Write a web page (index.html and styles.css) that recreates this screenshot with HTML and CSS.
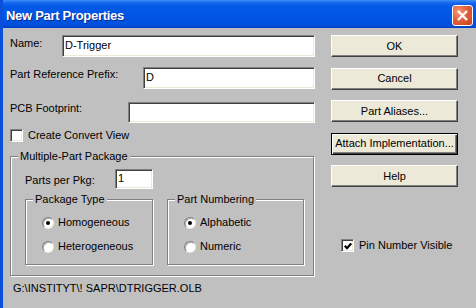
FILE: index.html
```html
<!DOCTYPE html>
<html lang="en">
<head>
  <meta charset="UTF-8">
  <title>New Part Properties</title>
  <link rel="stylesheet" href="styles.css">
</head>
<body>
  <div class="window">
    <div class="titlebar">
      <span class="title">New Part Properties</span>
      <span class="close">
        <svg width="19" height="19" viewBox="0 0 19 19"><path d="M5 5 L14 14 M14 5 L5 14" stroke="#fff" stroke-width="2.4" fill="none"/></svg>
      </span>
    </div>

    <div class="content">
      <div class="form">
        <div class="row row-name">
          <label class="lbl lbl-name" for="name">Name:</label>
          <input class="field" id="name" value="D-Trigger">
        </div>
        <div class="row row-prefix">
          <label class="lbl lbl-prefix" for="prefix">Part Reference Prefix:</label>
          <input class="field" id="prefix" value="D">
        </div>
        <div class="row row-pcb">
          <label class="lbl lbl-pcb" for="pcb">PCB Footprint:</label>
          <input class="field field-pcb" id="pcb" value="">
        </div>
        <div class="check check-convert"><span class="box"></span><span>Create Convert View</span></div>

        <fieldset class="group group-main">
          <legend>Multiple-Part Package</legend>
          <div class="row row-parts">
            <label class="lbl lbl-parts" for="parts">Parts per Pkg:</label>
            <input class="field field-parts" id="parts" value="1">
          </div>
          <div class="subgroups">
            <fieldset class="group group-type">
              <legend>Package Type</legend>
              <div class="option"><span class="radio on"></span>Homogeneous</div>
              <div class="option"><span class="radio"></span>Heterogeneous</div>
            </fieldset>
            <fieldset class="group group-numbering">
              <legend>Part Numbering</legend>
              <div class="option"><span class="radio on"></span>Alphabetic</div>
              <div class="option"><span class="radio"></span>Numeric</div>
            </fieldset>
          </div>
        </fieldset>
      </div>

      <div class="actions">
        <button class="btn">OK</button>
        <button class="btn">Cancel</button>
        <button class="btn">Part Aliases...</button>
        <button class="btn btn-default">Attach Implementation...</button>
        <button class="btn">Help</button>
        <div class="check check-pin">
          <span class="box"><svg width="8" height="8" viewBox="0 0 8 8"><polyline points="0.8,3.8 3,6.2 7.2,1.4" stroke="#000" stroke-width="2.2" fill="none"/></svg></span>
          <span>Pin Number Visible</span>
        </div>
      </div>
    </div>

    <div class="path">G:\INSTITYT\! SAPR\DTRIGGER.OLB</div>
  </div>
</body>
</html>
```

FILE: styles.css
```css
body {
  margin: 0;
  font-family: "Liberation Sans", Arial, sans-serif;
  font-size: 11px;
  line-height: 13px;
  color: #000;
  background: #c0c0c0;
  overflow: hidden;
}
.window {
  width: 476px;
  height: 308px;
  box-sizing: border-box;
  border-left: 3px solid #0a4fdc;
  background: #c0c0c0;
  overflow: hidden;
}
.titlebar {
  height: 28px;
  box-sizing: border-box;
  margin-left: -3px;
  padding: 2px 3px 0 6px;
  display: flex;
  align-items: center;
  justify-content: space-between;
  background: linear-gradient(to bottom, #3d8ef5 0, #1666ee 3px, #0559e6 6px, #0055e5 18px, #0050dc 25px, #0040c6 28px);
}
.title {
  color: #fff;
  font-weight: bold;
  font-size: 13px;
  letter-spacing: -0.3px;
  text-shadow: 1px 1px 0 #0a2a8c;
}
.close {
  width: 21px;
  height: 21px;
  box-sizing: border-box;
  border: 1px solid #fff;
  border-radius: 3px;
  background: radial-gradient(circle at 30% 30%, #f29a78 0, #e3603a 45%, #c8401e 100%);
  display: flex;
  align-items: center;
  justify-content: center;
}

/* dialog body */
.content {
  display: flex;
  gap: 16px;
  padding: 7px 0 0 7px;
}
.form {
  width: 305px;
}
.row {
  display: flex;
  align-items: flex-start;
}
.lbl {
  flex: none;
}
.lbl-name { width: 52px; padding-top: 2px; }
.lbl-prefix { width: 133px; padding-top: 1px; }
.lbl-pcb { width: 118px; }
.lbl-parts { width: 90px; padding-top: 5px; }

.row-prefix { margin-top: 10px; }
.row-pcb { margin-top: 13px; }

.field {
  flex: 1;
  min-width: 0;
  height: 22px;
  box-sizing: border-box;
  margin: 0;
  padding: 0 2px 3px 2px;
  font: inherit;
  color: #000;
  background: #fff;
  border: 1px solid;
  border-color: #808080 #fff #fff #808080;
  box-shadow: inset 1px 1px 0 #404040, inset -1px -1px 0 #ece9d8;
  outline: none;
}
.field-pcb { height: 21px; }
.field-parts {
  flex: none;
  width: 38px;
  height: 20px;
}

.check {
  display: flex;
  align-items: center;
  gap: 5px;
}
.check-convert { margin-top: 6px; }
.box {
  width: 13px;
  height: 13px;
  box-sizing: border-box;
  flex: none;
  background: #fff;
  border: 1px solid;
  border-color: #808080 #fff #fff #808080;
  box-shadow: inset 1px 1px 0 #404040, inset -1px -1px 0 #ece9d8;
  display: flex;
  align-items: center;
  justify-content: center;
}

/* group boxes */
.group {
  margin: 0;
  padding: 0;
  min-width: 0;
  box-sizing: border-box;
  border: 1px solid #808080;
  box-shadow: 1px 1px 0 #fff, inset 1px 1px 0 #fff;
}
.group legend {
  margin-left: 7px;
  padding: 0 2px;
  background: #c0c0c0;
}
.group-main {
  width: 304px;
  margin-top: 8px;
  padding: 6px 0 10px 0;
}
.row-parts,
.subgroups {
  margin-left: 14px;
}
.subgroups {
  display: flex;
  gap: 14px;
  margin-top: 4px;
}
.group-type { width: 128px; }
.group-numbering { width: 137px; }
.group-type,
.group-numbering {
  padding: 10px 0 11px 0;
}
.option {
  display: flex;
  align-items: center;
  gap: 4px;
  height: 13px;
  margin-left: 16px;
}
.option + .option { margin-top: 11px; }
.radio {
  position: relative;
  width: 12px;
  height: 12px;
  box-sizing: border-box;
  flex: none;
  border-radius: 50%;
  background: #fff;
  border: 1px solid;
  border-color: #808080 #ece9d8 #ece9d8 #808080;
  box-shadow: inset 1px 1px 0 #b0b0b0;
}
.radio.on::after {
  content: "";
  position: absolute;
  left: 3px;
  top: 3px;
  width: 4px;
  height: 4px;
  border-radius: 50%;
  background: #000;
}

/* buttons */
.actions {
  width: 127px;
  display: flex;
  flex-direction: column;
  gap: 10.5px;
}
.btn {
  width: 127px;
  height: 22px;
  box-sizing: border-box;
  margin: 0;
  padding: 0;
  font: inherit;
  color: #000;
  background: #ece9d8;
  border: 1px solid;
  border-color: #fff #404040 #404040 #fff;
  box-shadow: inset -1px -1px 0 #808080;
}
.btn-default {
  border-color: #000;
  box-shadow: inset 1px 1px 0 #fff, inset -1px -1px 0 #404040, inset -2px -2px 0 #808080;
}
.check-pin {
  margin: 41.5px 0 0 10px;
}

.path {
  margin-top: 6px;
  padding-left: 10px;
}
```
